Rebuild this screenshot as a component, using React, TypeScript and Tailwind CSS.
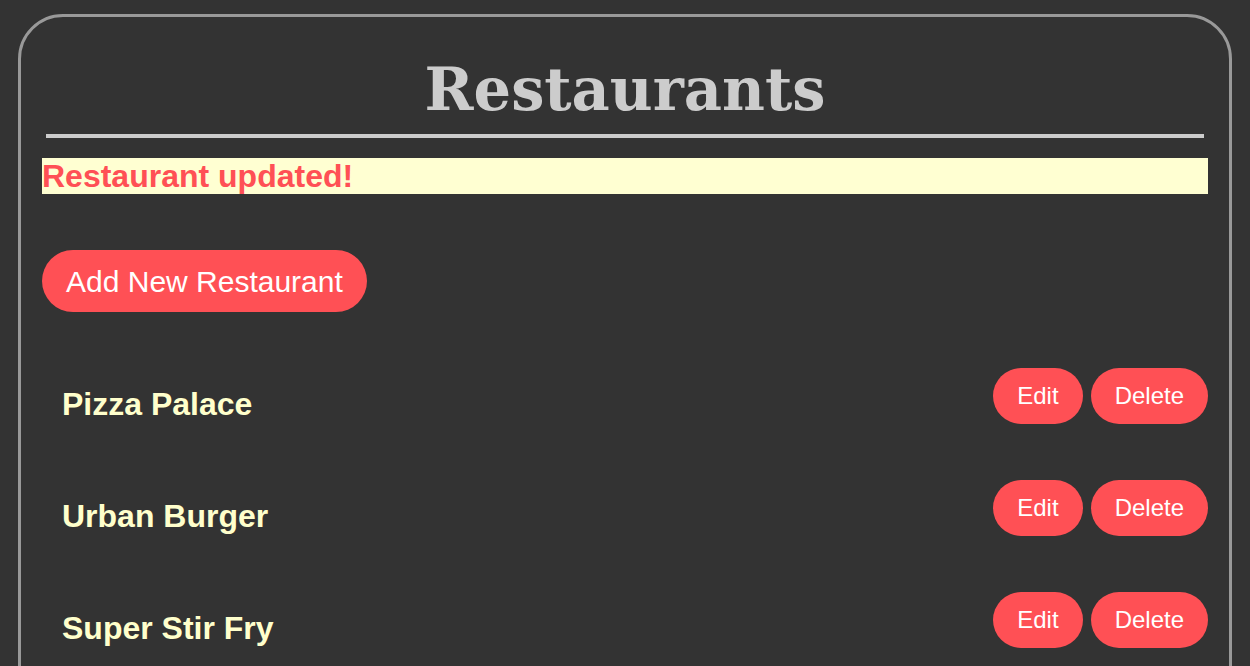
import React from 'react';

const restaurants = ['Pizza Palace', 'Urban Burger', 'Super Stir Fry'];

export default function App() {
  return (
    <div className="min-h-[666px] bg-[#333333] pt-[14px] px-[18px] font-['Liberation_Sans',Arial,sans-serif]">
      <div className="border-[3px] border-[#999999] rounded-[45px] pt-[41px] px-[21px] pb-10 min-h-[700px]">
        {/* Title */}
        <h1 className="text-center text-[59px] font-bold leading-[64px] text-[#cccccc] font-['DejaVu_Serif',Georgia,serif]">
          Restaurants
        </h1>
        <div className="mx-1 mt-3 h-1 bg-[#cccccc]" />

        {/* Flash message */}
        <div className="mt-5 bg-[#ffffd2] text-[#ff5055] text-[32px] font-bold leading-[36px]">
          Restaurant updated!
        </div>

        {/* Add button */}
        <button
          type="button"
          className="mt-14 block rounded-full bg-[#ff5055] px-6 h-[62px] text-[30px] text-white"
        >
          Add New Restaurant
        </button>

        {/* List */}
        <ul className="mt-14 flex flex-col gap-14">
          {restaurants.map((name) => (
            <li key={name} className="flex items-start justify-between">
              <h3 className="mt-[18px] pl-5 text-[32px] font-bold leading-[36px] text-[#ffffcc]">
                {name}
              </h3>
              <div className="flex gap-2">
                <button
                  type="button"
                  className="rounded-full bg-[#ff5055] px-6 h-14 text-2xl text-white"
                >
                  Edit
                </button>
                <button
                  type="button"
                  className="rounded-full bg-[#ff5055] px-6 h-14 text-2xl text-white"
                >
                  Delete
                </button>
              </div>
            </li>
          ))}
        </ul>
      </div>
    </div>
  );
}
